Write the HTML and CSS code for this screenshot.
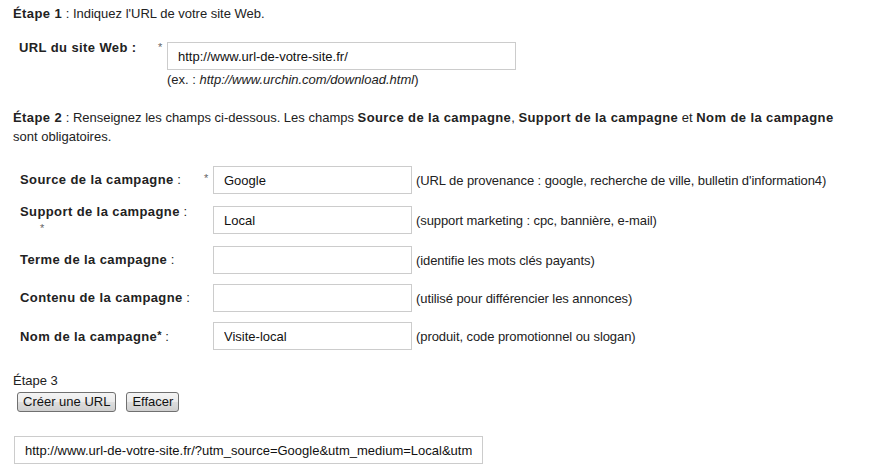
FILE: index.html
```html
<!DOCTYPE html>
<html lang="fr">
<head>
<meta charset="utf-8">
<title>Outil de création d'URL</title>
<link rel="stylesheet" href="styles.css">
</head>
<body>
<div class="page">
  <p class="step step1"><b>Étape 1</b> : Indiquez l'URL de votre site Web.</p>

  <div class="url-row">
    <label class="url-label" for="url">URL du site Web :</label>
    <span class="url-star">*</span>
    <input id="url" class="field url-field" type="text" value="http://www.url-de-votre-site.fr/">
  </div>
  <p class="example">(ex. : <i>http://www.urchin.com/download.html</i>)</p>

  <p class="step step2"><b>Étape 2</b> : Renseignez les champs ci-dessous. Les champs <b>Source de la campagne</b>, <b>Support de la campagne</b> et <b>Nom de la campagne</b><br>sont obligatoires.</p>

  <div class="fields">
    <div class="row">
      <label class="lbl"><b>Source de la campagne</b> :</label>
      <span class="star">*</span>
      <input class="field small" type="text" value="Google">
      <span class="hint">(URL de provenance : google, recherche de ville, bulletin d'information4)</span>
    </div>
    <div class="row tall">
      <label class="lbl two"><b>Support de la campagne</b> :<br><span class="star2">*</span></label>
      <span class="star"></span>
      <input class="field small" type="text" value="Local">
      <span class="hint">(support marketing : cpc, bannière, e-mail)</span>
    </div>
    <div class="row">
      <label class="lbl"><b>Terme de la campagne</b> :</label>
      <span class="star"></span>
      <input class="field small" type="text" value="">
      <span class="hint">(identifie les mots clés payants)</span>
    </div>
    <div class="row">
      <label class="lbl"><b>Contenu de la campagne</b> :</label>
      <span class="star"></span>
      <input class="field small" type="text" value="">
      <span class="hint">(utilisé pour différencier les annonces)</span>
    </div>
    <div class="row">
      <label class="lbl"><b>Nom de la campagne</b><b class="sup">*</b> :</label>
      <span class="star"></span>
      <input class="field small" type="text" value="Visite-local">
      <span class="hint">(produit, code promotionnel ou slogan)</span>
    </div>
  </div>

  <p class="step step3">Étape 3</p>
  <div class="buttons">
    <button class="btn" type="button">Créer une URL</button>
    <button class="btn" type="button">Effacer</button>
  </div>

  <input class="field output" type="text" value="http://www.url-de-votre-site.fr/?utm_source=Google&amp;utm_medium=Local&amp;utm_campaign=Visite-local">
</div>
</body>
</html>
```

FILE: styles.css
```css
html, body {
  margin: 0;
  padding: 0;
  background: #ffffff;
}

body {
  font-family: "Liberation Sans", Arial, sans-serif;
  font-size: 13px;
  color: #222222;
}

.page {
  padding: 5px 0 0 13px;
}

.step {
  margin: 0;
  line-height: 18px;
}

b {
  font-weight: bold;
  letter-spacing: 0.4px;
}

.url-row {
  display: flex;
  align-items: flex-start;
  margin: 16px 0 0 6px;
}

.url-label {
  width: 139px;
  font-weight: bold;
  letter-spacing: 0.4px;
  line-height: 18px;
}

.url-star {
  width: 9px;
  font-size: 11px;
  color: #666666;
  line-height: 12px;
  padding-top: 2px;
}

.field {
  box-sizing: border-box;
  height: 28px;
  border: 1px solid #cccccc;
  border-radius: 0;
  padding: 0 10px;
  font-family: "Liberation Sans", Arial, sans-serif;
  font-size: 13px;
  color: #111111;
  background: #ffffff;
  outline: none;
  margin: 0;
}

.url-field {
  width: 349px;
  margin-top: 3px;
}

.example {
  margin: 1px 0 0 154px;
  line-height: 18px;
}

.step2 {
  margin-top: 19px;
  line-height: 19px;
}

.fields {
  margin: 15px 0 0 7px;
}

.row {
  display: flex;
  align-items: center;
  height: 38px;
}

.row.tall {
  height: 42px;
}

.lbl {
  width: 183px;
  line-height: 18px;
}

.lbl.two {
  line-height: 16px;
}

.star2 {
  display: inline-block;
  padding-left: 20px;
  font-size: 11px;
  color: #666666;
}

.sup {
  font-size: 11px;
  letter-spacing: 0;
  vertical-align: 2px;
}

.star {
  width: 10px;
  padding-left: 1px;
  box-sizing: border-box;
  font-size: 11px;
  color: #666666;
  margin-top: -5px;
}

.small {
  width: 199px;
}

.hint {
  margin-left: 4px;
  white-space: nowrap;
  letter-spacing: -0.08px;
}

.step3 {
  margin-top: 17px;
}

.buttons {
  display: flex;
  gap: 10px;
  margin: 2px 0 0 4px;
}

.btn {
  height: 20px;
  padding: 0 5px;
  font-family: "Liberation Sans", Arial, sans-serif;
  font-size: 13px;
  color: #111111;
  border: 1px solid #707070;
  border-radius: 3px;
  background: linear-gradient(#f4f4f4 0%, #ebebeb 48%, #dddddd 52%, #cfcfcf 100%);
  line-height: 16px;
}

.output {
  display: block;
  width: 469px;
  margin: 24px 0 0 1px;
}
```
